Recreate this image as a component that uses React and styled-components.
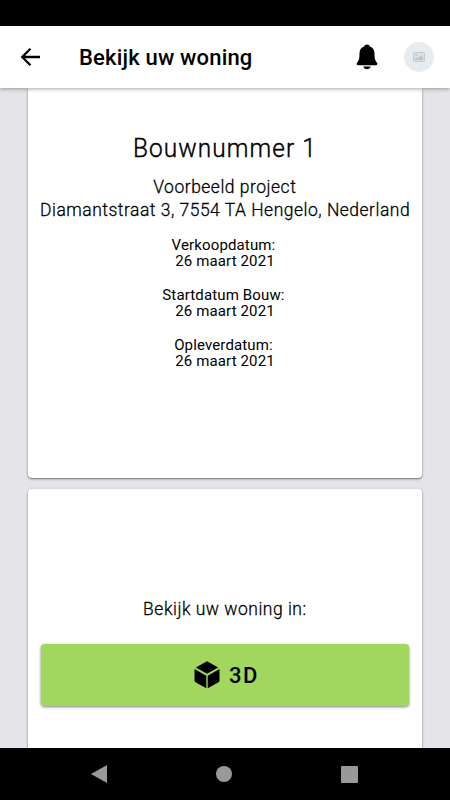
import React from 'react';
import styled, { createGlobalStyle } from 'styled-components';

const GlobalStyle = createGlobalStyle`
  * {
    box-sizing: border-box;
  }
  body {
    margin: 0;
    background: #000;
    color: #000;
    font-family: Roboto, 'Liberation Sans', sans-serif;
  }
`;
const Screen = styled.div`
  display: flex;
  flex-direction: column;
  width: 450px;
  height: 800px;
  overflow: hidden;
`;
const StatusBar = styled.div`
  flex-shrink: 0;
  height: 26px;
  background: #000;
`;
const Toolbar = styled.header`
  position: relative;
  z-index: 1;
  display: flex;
  flex-shrink: 0;
  align-items: center;
  height: 62px;
  padding: 0 16px 0 19px;
  background: #fff;
  box-shadow: 0 1px 4px rgba(0, 0, 0, 0.35);
`;
const PageTitle = styled.h1`
  flex: 1;
  margin: 1px 0 0 36px;
  font-size: 22px;
  font-weight: 500;
  line-height: 26px;
  letter-spacing: 0.18px;
`;
const Avatar = styled.div`
  display: flex;
  align-items: center;
  justify-content: center;
  width: 30px;
  height: 30px;
  margin-left: 26px;
  border-radius: 50%;
  background: #e6ecef;
`;
const Content = styled.main`
  display: flex;
  flex: 1;
  flex-direction: column;
  gap: 11px;
  min-height: 0;
  padding: 0 28px;
  overflow: hidden;
  background: #e5e4e9;
`;
const Card = styled.section`
  display: flex;
  flex-direction: column;
  flex-shrink: 0;
  align-items: center;
  height: ${props => props.$height}px;
  padding: ${props => props.$top}px 13px 0;
  border-radius: ${props => (props.$first ? '0 0 4px 4px' : '4px')};
  background: #fff;
  box-shadow: 0 1px 3px rgba(0, 0, 0, 0.35), 0 1px 1px rgba(0, 0, 0, 0.25);
  text-align: center;
`;
const HouseName = styled.h2`
  margin: 0 0 11px;
  font-size: 26px;
  font-weight: 300;
  line-height: 32px;
  letter-spacing: 1.15px;
  white-space: nowrap;
  transform: scaleX(0.94);
  -webkit-text-stroke: 0.4px #000;
`;
const Line = styled.div`
  font-size: 19px;
  font-weight: 300;
  line-height: 23px;
  letter-spacing: 0.55px;
  white-space: nowrap;
  transform: scaleX(0.92);
  -webkit-text-stroke: 0.3px #000;
`;
const Dates = styled.div`
  display: flex;
  flex-direction: column;
  gap: 16.7px;
  margin-top: 15.5px;
`;
const DateItem = styled.div`
  font-size: 15px;
  line-height: 16.7px;
  letter-spacing: 0.14px;
`;
const DateLabel = styled.div`
  padding-right: 3px;
`;
const ViewButton = styled.button`
  display: flex;
  align-items: center;
  justify-content: center;
  align-self: stretch;
  gap: 9px;
  height: 62px;
  margin: 24px 0 0;
  padding: 0 0 0 3px;
  border: 0;
  border-radius: 4px;
  background: #a2d75f;
  box-shadow: 0 1px 3px rgba(0, 0, 0, 0.5);
  color: #000;
  font: 500 22px Roboto, 'Liberation Sans', sans-serif;
  letter-spacing: 1.5px;
`;
const NavBar = styled.nav`
  display: flex;
  flex-shrink: 0;
  align-items: center;
  justify-content: space-between;
  height: 52px;
  padding: 0 92px 0 91px;
  background: #000;
`;

const dates = [
  { label: 'Verkoopdatum:', value: '26 maart 2021' },
  { label: 'Startdatum Bouw:', value: '26 maart 2021' },
  { label: 'Opleverdatum:', value: '26 maart 2021' }
];

const BackIcon = () => (
  <svg width="24" height="24" viewBox="0 0 24 24" fill="none" stroke="#000" strokeWidth="2.300">
    <path d="M21 12H3.500M11.500 3.700L3.200 12l8.300 8.300" />
  </svg>
);
const BellIcon = () => (
  <svg width="22" height="26" viewBox="0 0 22 26">
    <path d="M11 .5c-1.600 0-2.600.8-2.900 2C5 3.500 3.500 6 3.500 9.500c0 6-1 7.500-2.400 9-.9 1-.5 2.700 1.100 2.700h17.600c1.600 0 2-1.700 1.100-2.700-1.400-1.500-2.400-3-2.400-9 0-3.500-1.500-6-4.600-7-.3-1.200-1.300-2-2.900-2z" />
    <path d="M7.300 22.600h7.400c-.5 1.700-1.900 2.700-3.700 2.700s-3.200-1-3.700-2.700z" />
  </svg>
);
const PictureIcon = () => (
  <svg width="12" height="10" viewBox="0 0 12 10">
    <rect x=".5" y=".5" width="11" height="9" rx="1" fill="#dde1e3" stroke="#c5c9cb" />
    <circle cx="3.200" cy="3.200" r="1" fill="#bfc3c5" />
    <path d="M2 8V6.700l1.500-1.300L5 6.500l3-3 2 2V8z" fill="#bfc3c5" />
  </svg>
);
const CubeIcon = () => (
  <svg width="26" height="28" viewBox="0 0 26 28">
    <path d="M13 .2L24.200 6.400 13 12.800 1.800 6.400zM.5 8L12.300 14.700v12.600L1.500 21.200C.8 20.800.5 20.300.5 19.600zM25.500 8L13.700 14.700v12.600l10.800-6.100c.7-.4 1-.9 1-1.600z" />
  </svg>
);

class App extends React.Component {
  render() {
    return (
      <Screen>
        <GlobalStyle />
        <StatusBar />
        <Toolbar>
          <BackIcon />
          <PageTitle>Bekijk uw woning</PageTitle>
          <BellIcon />
          <Avatar>
            <PictureIcon />
          </Avatar>
        </Toolbar>
        <Content>
          <Card $first $height={390} $top={44}>
            <HouseName>Bouwnummer 1</HouseName>
            <Line>Voorbeeld project</Line>
            <Line>Diamantstraat 3, 7554 TA Hengelo, Nederland</Line>
            <Dates>
              {dates.map((item, index) => {
                return (
                  <DateItem key={index}>
                    <DateLabel>{item.label}</DateLabel>
                    <div>{item.value}</div>
                  </DateItem>
                );
              })}
            </Dates>
          </Card>
          <Card $height={300} $top={108}>
            <Line>Bekijk uw woning in:</Line>
            <ViewButton>
              <CubeIcon />
              3D
            </ViewButton>
          </Card>
        </Content>
        <NavBar>
          <svg width="16" height="18" viewBox="0 0 16 18" fill="#999">
            <path d="M0 9L16 0v18z" />
          </svg>
          <svg width="16" height="16" viewBox="0 0 16 16" fill="#999">
            <circle cx="8" cy="8" r="8" />
          </svg>
          <svg width="17" height="17" viewBox="0 0 17 17" fill="#999">
            <rect width="17" height="17" rx="1" />
          </svg>
        </NavBar>
      </Screen>
    );
  }
}
export default App;
